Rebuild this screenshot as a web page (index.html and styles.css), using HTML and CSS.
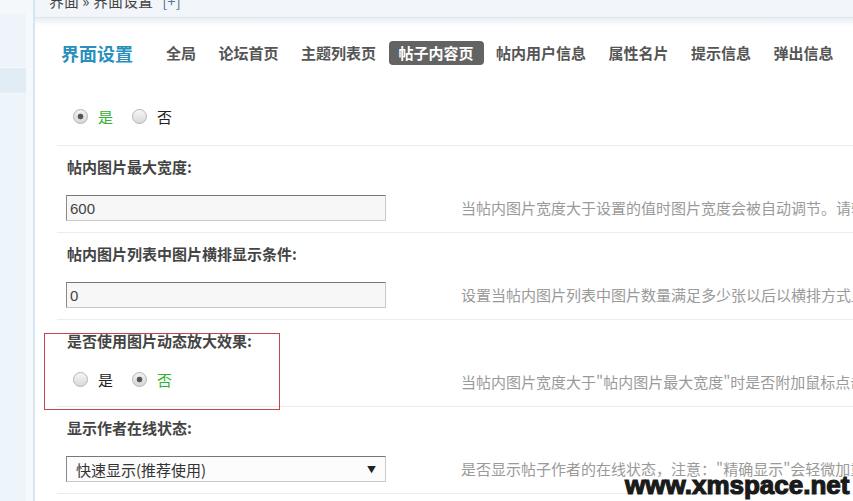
FILE: index.html
```html
<!DOCTYPE html>
<html lang="zh-CN">
<head>
    <meta charset="UTF-8">
    <meta name="viewport" content="width=device-width, initial-scale=1.0">
    <title>界面设置</title>
    <link rel="stylesheet" href="styles.css">
</head>
<body>
    <div class="page">
        <aside class="side">
            <div class="menu">
                <div class="menu-top"></div>
                <div class="menu-item"></div>
                <div class="menu-item active"></div>
                <div class="menu-rest"></div>
            </div>
            <div class="rail"></div>
        </aside>

        <div class="main">
            <div class="topbar">
                <div class="crumb">界面 &raquo; 界面设置 <a href="#">[+]</a></div>
            </div>
            <div class="topshade"></div>

            <div class="tabbar">
                <h3>界面设置</h3>
                <ul class="tabs">
                    <li>全局</li>
                    <li>论坛首页</li>
                    <li>主题列表页</li>
                    <li class="current">帖子内容页</li>
                    <li>帖内用户信息</li>
                    <li>属性名片</li>
                    <li>提示信息</li>
                    <li>弹出信息</li>
                </ul>
            </div>

            <div class="settings">
                <div class="value-row first">
                    <div class="field">
                        <label class="radio"><input type="radio" name="r1" checked><span class="on">是</span></label>
                        <label class="radio"><input type="radio" name="r1"><span>否</span></label>
                    </div>
                </div>

                <div class="label-row">帖内图片最大宽度:</div>
                <div class="value-row">
                    <div class="field"><input class="txt" type="text" value="600"></div>
                    <div class="desc">当帖内图片宽度大于设置的值时图片宽度会被自动调节。请输入大于 0 的整数</div>
                </div>

                <div class="label-row">帖内图片列表中图片横排显示条件:</div>
                <div class="value-row">
                    <div class="field"><input class="txt" type="text" value="0"></div>
                    <div class="desc">设置当帖内图片列表中图片数量满足多少张以后以横排方式显示</div>
                </div>

                <div class="label-row">是否使用图片动态放大效果:</div>
                <div class="value-row radios">
                    <div class="field">
                        <label class="radio"><input type="radio" name="r2"><span>是</span></label>
                        <label class="radio"><input type="radio" name="r2" checked><span class="on">否</span></label>
                    </div>
                    <div class="desc">当帖内图片宽度大于"帖内图片最大宽度"时是否附加鼠标点击放大效果</div>
                </div>

                <div class="label-row">显示作者在线状态:</div>
                <div class="value-row">
                    <div class="field">
                        <div class="select-wrap">
                            <select class="sel">
                                <option>快速显示(推荐使用)</option>
                                <option>精确显示</option>
                            </select>
                        </div>
                    </div>
                    <div class="desc">是否显示帖子作者的在线状态，注意："精确显示"会轻微加重服务器负担</div>
                </div>
            </div>
        </div>
    </div>

    <div class="mark-box"></div>
    <div class="watermark">www.xmspace.net</div>
</body>
</html>
```

FILE: styles.css
```css
body {
    margin: 0;
    font-family: "Noto Sans CJK SC", "Noto Sans", sans-serif;
    background: #fff;
    overflow: hidden;
}

.page {
    display: flex;
    height: 501px;
    overflow: hidden;
}

/* left menu strip */
.side {
    display: flex;
    width: 35px;
    flex-shrink: 0;
}

.menu {
    width: 26px;
    display: flex;
    flex-direction: column;
}

.menu-top {
    height: 14px;
    background: #f4f8fb;
}

.menu-item {
    height: 53px;
    background: #eef4f9;
    border-bottom: 1px solid #f6f9fc;
}

.menu-item.active {
    height: 25px;
    background: #e2ecf5;
}

.menu-rest {
    flex: 1;
    background: #eef5fa;
}

.rail {
    width: 7px;
    background: #f4f9fd;
    border-right: 2px solid #d5e5f2;
}

.main {
    flex: 1;
    min-width: 0;
}

/* breadcrumbs */
.topbar {
    height: 17px;
    background: #f2f6fa;
    border-bottom: 1px solid #dce6ef;
    overflow: hidden;
    padding-left: 14px;
}

.crumb {
    margin-top: -7px;
    line-height: 16px;
    font-size: 15px;
    color: #444;
}

.crumb a {
    color: #5a7394;
    text-decoration: none;
    margin-left: 6px;
}

.topshade {
    height: 8px;
    background: linear-gradient(#e8eff5, #fff);
}

/* tabs */
.tabbar {
    display: flex;
    align-items: center;
    margin-top: 15px;
    padding-left: 26px;
    height: 24px;
}

.tabbar h3 {
    margin: 0 23px 0 0;
    font-size: 18px;
    line-height: 24px;
    color: #2a8fbd;
    font-weight: bold;
}

.tabs {
    display: flex;
    list-style: none;
    margin: 0;
    padding: 0;
    gap: 2.5px;
}

.tabs li {
    padding: 0 10px;
    font-size: 15px;
    line-height: 24px;
    font-weight: bold;
    color: #555;
    white-space: nowrap;
    border-radius: 4px;
}

.tabs li.current {
    background: #636363;
    color: #fff;
}

/* settings list */
.settings {
    margin-left: 22px;
}

.label-row {
    height: 42px;
    line-height: 42px;
    padding-left: 10px;
    font-size: 15px;
    font-weight: bold;
    color: #444;
}

.value-row {
    display: flex;
    align-items: flex-start;
    height: 45px;
    box-sizing: border-box;
    padding-top: 7px;
    border-bottom: 1px solid #ececec;
}

.value-row.first {
    height: 81px;
    padding-top: 41px;
}

.value-row.radios {
    padding-top: 4px;
}

.field {
    width: 394px;
    flex-shrink: 0;
    box-sizing: border-box;
    padding-left: 9px;
    display: flex;
    align-items: center;
    height: 26px;
}

.value-row.first .field {
    height: 20px;
}

.desc {
    padding-left: 10px;
    font-size: 15px;
    line-height: 26px;
    color: #9a9a9a;
    white-space: nowrap;
}

.value-row.radios .desc {
    margin-top: 3px;
}

/* radios */
.radio {
    display: flex;
    align-items: center;
    margin-left: 7px;
    margin-right: 12px;
    font-size: 15px;
    color: #222;
}

.radio input {
    appearance: none;
    -webkit-appearance: none;
    width: 15px;
    height: 15px;
    margin: 0 10px 0 0;
    border: 1px solid #b5b5b5;
    border-radius: 50%;
    box-sizing: border-box;
    background: linear-gradient(#f6f6f6, #d9d9d9);
}

.radio input:checked {
    background: radial-gradient(circle, #555 0, #555 2.5px, transparent 3.2px), linear-gradient(#f2f2f2, #d6d6d6);
}

.radio .on {
    color: #33b233;
}

/* inputs */
.txt,
.sel {
    width: 320px;
    height: 26px;
    box-sizing: border-box;
    margin: 0;
    border: 1px solid #c9c9c9;
    border-top-color: #777;
    border-left-color: #8a8a8a;
    font-family: "Liberation Sans", "Noto Sans CJK SC", sans-serif;
    font-size: 15px;
    color: #444;
    outline: none;
}

.txt {
    padding: 0 3px;
    background: #f7f7f7;
}

.select-wrap {
    position: relative;
}

.sel {
    appearance: none;
    -webkit-appearance: none;
    padding: 0 9px;
    background: #fcfcfc;
    color: #333;
    font-family: "Noto Sans CJK SC", sans-serif;
}

.select-wrap::after {
    content: "▼";
    position: absolute;
    right: 10px;
    top: 7px;
    font-size: 9px;
    color: #222;
    pointer-events: none;
}

/* annotation overlays */
.mark-box {
    position: absolute;
    left: 44px;
    top: 333px;
    width: 234px;
    height: 75px;
    border: 1px solid #c4474d;
}

.watermark {
    position: absolute;
    left: 625px;
    top: 470px;
    font-family: "Liberation Sans", Arial, sans-serif;
    font-weight: bold;
    font-size: 26px;
    line-height: 30px;
    color: #1a1a1a;
    -webkit-text-stroke: 1.2px #1a1a1a;
}
```
